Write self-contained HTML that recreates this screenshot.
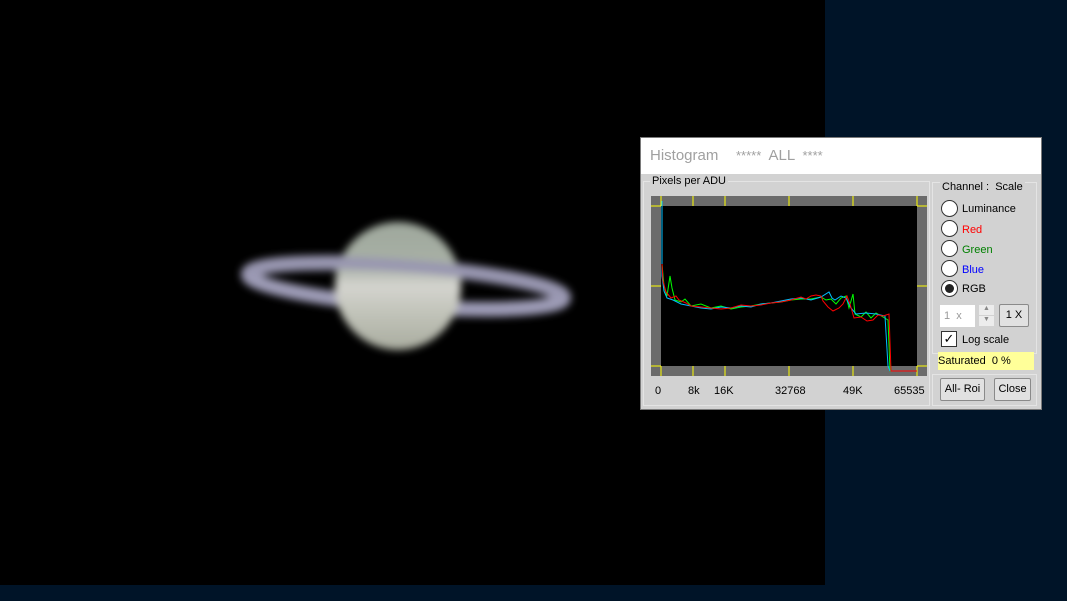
<!DOCTYPE html>
<html><head><meta charset="utf-8"><style>
*{margin:0;padding:0;box-sizing:border-box}
body{width:1067px;height:601px;background:#001428;position:relative;overflow:hidden;font-family:"Liberation Sans",sans-serif;font-size:11px;color:#000}
.abs{position:absolute}
.radio{position:absolute;left:941px;width:17px;height:17px;border-radius:50%;background:#fff;border:1px solid #333}
.rl{position:absolute;left:962px;font-size:11px}
.btn{position:absolute;background:#e1e1e1;border:1px solid #8a8a8a;border-radius:2px;text-align:center;font-size:11px}
</style></head><body>
<div class="abs" style="left:0;top:0;width:825px;height:585px;background:#000"></div>
<svg class="abs" style="left:0;top:0" width="825" height="585">
<defs><filter id="b" x="-50%" y="-50%" width="200%" height="200%"><feGaussianBlur stdDeviation="4"/></filter>
<linearGradient id="pg" x1="0" y1="0" x2="0" y2="1">
<stop offset="0" stop-color="#9ea79c"/><stop offset="0.35" stop-color="#a9b1a6"/><stop offset="0.5" stop-color="#d4d4cf"/><stop offset="0.7" stop-color="#c2c4ba"/><stop offset="1" stop-color="#a9ac9f"/></linearGradient></defs>
<g filter="url(#b)">
<g transform="rotate(4.3 406 286)">
<ellipse cx="406" cy="286" rx="158" ry="20" fill="none" stroke="#9d9bb6" stroke-width="15"/>
</g>
<ellipse cx="398" cy="286" rx="63" ry="64" fill="url(#pg)"/>
<g transform="rotate(4.3 406 286)">
<path d="M248 286 A158 20 0 0 1 564 286" fill="none" stroke="#9896b0" stroke-width="12"/>
</g>
</g>
</svg>
<!-- dialog -->
<div class="abs" style="left:640px;top:137px;width:402px;height:273px;background:#d2d2d2;border:1px solid #7a7a7a"></div>
<div class="abs" style="left:641px;top:138px;width:400px;height:36px;background:#fff"></div>
<div class="abs" style="left:650px;top:147px;font-size:15px;color:#a0a0a0">Histogram</div>
<div class="abs" style="left:736px;top:147px;font-size:13px;color:#a0a0a0">*****&nbsp; <span style="font-size:15px">ALL</span>&nbsp; ****</div>
<div class="abs" style="left:643px;top:181px;width:287px;height:225px;border:1px solid #e4e4e4"></div>
<div class="abs" style="left:650px;top:175px;background:#d2d2d2;padding:0 2px">Pixels per ADU</div>
<div class="abs" style="left:932px;top:182px;width:105px;height:172px;border:1px solid #e4e4e4"></div>
<div class="abs" style="left:940px;top:181px;background:#d2d2d2;padding:0 2px">Channel :&nbsp; Scale</div>
<div class="abs" style="left:932px;top:374px;width:105px;height:32px;border:1px solid #e4e4e4"></div>
<svg class="abs" style="left:651px;top:196px" width="276" height="180">
<rect width="276" height="180" fill="#6b6b6b"/>
<rect x="10" y="10" width="256" height="160" fill="#000"/>
<g stroke="#ffff00" stroke-width="1">
<path d="M10 0V10M42 0V10M74 0V10M138 0V10M202 0V10M266 0V10M10 170V180M42 170V180M74 170V180M138 170V180M202 170V180M266 170V180M0 90H10M266 90H276M0 170H10M266 170H276M0 10H10M266 10H276"/>
</g>
<polyline fill="none" stroke="#00ff00" stroke-width="1" points="11,68 13,90 16,100 19,80 21,92 24,104 30,106 34,103 40,110 50,108 60,112 70,110 80,113 90,111 100,110 110,108 120,107 130,106 140,104 150,103 160,103 170,101 175,104 180,103 185,108 190,102 195,100 198,112 200,105 202,98 204,118 210,121 215,116 220,122 225,117 232,121 237,124 239,175 244,175"/>
<polyline fill="none" stroke="#00bfff" stroke-width="1" points="11,5 11,80 13,95 16,102 22,104 30,108 40,110 50,112 60,113 70,111 80,112 90,110 100,111 110,108 120,107 130,105 140,103 150,102 160,104 170,101 178,96 181,102 184,104 190,100 195,102 200,112 205,118 215,117 225,118 234,120 237,170 239,175"/>
<polyline fill="none" stroke="#ff0000" stroke-width="1" points="11,68 12,85 15,96 20,102 25,100 28,104 35,107 40,110 50,111 60,112 70,113 80,112 90,109 100,110 110,109 120,107 130,106 140,104 150,101 155,103 160,100 165,99 170,100 172,105 177,111 182,115 188,112 192,108 196,100 199,108 203,122 210,121 216,125 222,124 227,119 232,120 238,118 240,175 266,175"/>
</svg>
<div class="abs" style="left:655px;top:385px">0</div>
<div class="abs" style="left:688px;top:385px">8k</div>
<div class="abs" style="left:714px;top:385px">16K</div>
<div class="abs" style="left:775px;top:385px">32768</div>
<div class="abs" style="left:843px;top:385px">49K</div>
<div class="abs" style="left:894px;top:385px">65535</div>
<div class="radio" style="top:200px"></div><div class="rl" style="top:203px">Luminance</div>
<div class="radio" style="top:220px"></div><div class="rl" style="top:224px;color:#ff0000">Red</div>
<div class="radio" style="top:240px"></div><div class="rl" style="top:244px;color:#008000">Green</div>
<div class="radio" style="top:260px"></div><div class="rl" style="top:264px;color:#0000ff">Blue</div>
<div class="radio" style="top:280px"></div><div class="rl" style="top:283px">RGB</div>
<div class="abs" style="left:945px;top:284px;width:9px;height:9px;border-radius:50%;background:#222"></div>
<div class="abs" style="left:940px;top:305px;width:35px;height:22px;background:#fff"></div>
<div class="abs" style="left:944px;top:310px;color:#999">1&nbsp; x</div>
<div class="abs" style="left:979px;top:305px;width:15px;height:10px;background:#ececec;font-size:7px;text-align:center;color:#888">▲</div>
<div class="abs" style="left:979px;top:316px;width:15px;height:10px;background:#ececec;font-size:7px;text-align:center;color:#888">▼</div>
<div class="btn" style="left:999px;top:304px;width:30px;height:23px;line-height:21px">1 X</div>
<div class="abs" style="left:941px;top:331px;width:16px;height:16px;background:#fff;border:1px solid #333;font-size:13px;line-height:14px;text-align:center">✓</div>
<div class="abs" style="left:962px;top:334px">Log scale</div>
<div class="abs" style="left:938px;top:352px;width:96px;height:18px;background:#ffff99;padding:3px 0 0 0">Saturated&nbsp; 0 %</div>
<div class="btn" style="left:940px;top:378px;width:45px;height:23px;line-height:21px">All- Roi</div>
<div class="btn" style="left:994px;top:378px;width:37px;height:23px;line-height:21px">Close</div>
</body></html>
